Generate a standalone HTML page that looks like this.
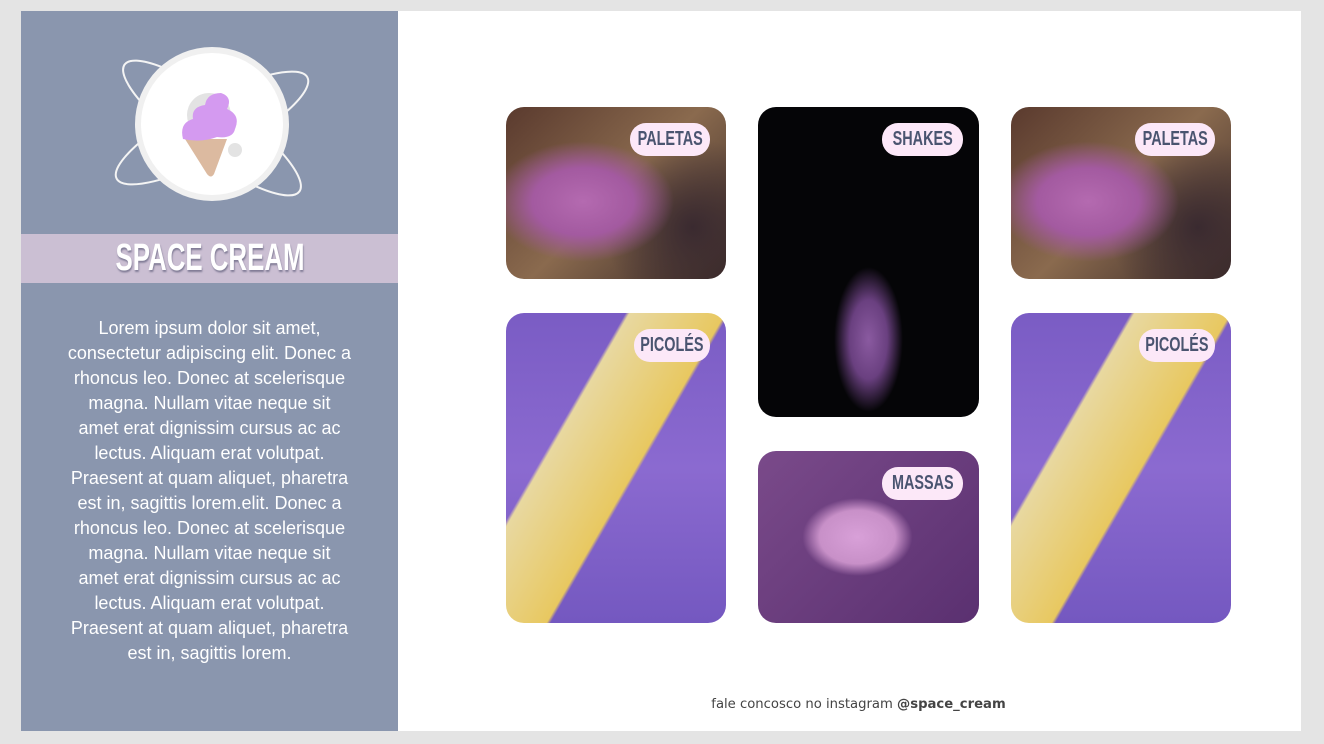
<!DOCTYPE html>
<html><head><style>
body{margin:0;width:1324px;height:744px;background:#e4e4e4;position:relative;overflow:hidden;font-family:"Liberation Sans",sans-serif}
.left{position:absolute;left:21px;top:11px;width:377px;height:720px;background:#8a96ae}
.band{position:absolute;left:0;top:223px;width:377px;height:49px;background:#cbbfd3;text-align:center;color:#fff;font-weight:bold;font-size:38px;line-height:49px;text-shadow:1px 2px 2px rgba(80,80,110,.6)}
.band span{display:inline-block;transform:scaleX(0.68)}
.txt{position:absolute;left:45px;top:305px;width:287px;text-align:center;color:#fff;font-size:18px;line-height:25px}
.right{position:absolute;left:398px;top:11px;width:903px;height:720px;background:#fff}
.card{position:absolute;border-radius:18px;overflow:hidden}
.pill{position:absolute;top:16px;right:16px;background:#fce8f8;color:#4a5470;border-radius:16px;height:33px;line-height:33px;display:flex;justify-content:center;font-weight:bold;font-size:20px;white-space:nowrap}
.pill span{display:inline-block;transform:scaleX(0.72)}
.pal{background:radial-gradient(ellipse at 35% 55%,#b46ab0 0,#a35aa0 25%,transparent 45%),radial-gradient(circle at 85% 70%,#3a2a30 0,transparent 40%),linear-gradient(135deg,#5a3a2e,#8a6a4e 50%,#3a2a28)}
.pic{background:linear-gradient(120deg,transparent 30%,#e8d8a0 31%,#e8c860 55%,transparent 56%),linear-gradient(180deg,#7a5cc4,#8b6ad0 50%,#7458c0);}
.foot{position:absolute;left:9px;width:903px;top:686px;text-align:center;font-size:13.2px;color:#444;font-family:"DejaVu Sans",sans-serif}
</style></head><body>
<div class="left">
<svg style="position:absolute;left:0;top:0" width="377" height="223" viewBox="0 0 377 223">
<ellipse cx="191" cy="117" rx="108" ry="28" transform="rotate(36 191 117)" fill="none" stroke="#f4f4f4" stroke-width="2"/>
<ellipse cx="191" cy="117" rx="108" ry="28" transform="rotate(-28 191 117)" fill="none" stroke="#f4f4f4" stroke-width="2"/>
<circle cx="191" cy="113" r="77" fill="#f0f0f0"/>
<circle cx="191" cy="113" r="71" fill="#fff"/>
<circle cx="188" cy="104" r="22" fill="#e3e3e3"/>
<circle cx="214" cy="139" r="7" fill="#e3e3e3"/>
<path d="M164 128 L206 128 L193 163 Q190 168 186 163 Z" fill="#dcbaa0"/>
<path d="M162 128 Q158 112 172 108 Q170 96 184 94 Q186 82 200 82 Q212 86 206 98 Q220 104 214 118 Q212 128 196 126 Q180 132 162 128 Z" fill="#d49af0"/>
</svg>
<div class="band"><span>SPACE CREAM</span></div>
<div class="txt">Lorem ipsum dolor sit amet, consectetur adipiscing elit. Donec a rhoncus leo. Donec at scelerisque magna. Nullam vitae neque sit amet erat dignissim cursus ac ac lectus. Aliquam erat volutpat. Praesent at quam aliquet, pharetra est in, sagittis lorem.elit. Donec a rhoncus leo. Donec at scelerisque magna. Nullam vitae neque sit amet erat dignissim cursus ac ac lectus. Aliquam erat volutpat. Praesent at quam aliquet, pharetra est in, sagittis lorem.</div>
</div>
<div class="right">
<div class="card pal" style="left:108px;top:96px;width:220px;height:172px"><div class="pill" style="width:80px"><span>PALETAS</span></div></div>
<div class="card" style="left:360px;top:96px;width:221px;height:310px;background:radial-gradient(ellipse at 50% 75%,#8a5aa0 0,#6a4080 12%,transparent 22%),#050507"><div class="pill" style="width:81px"><span>SHAKES</span></div></div>
<div class="card pal" style="left:613px;top:96px;width:220px;height:172px"><div class="pill" style="width:80px"><span>PALETAS</span></div></div>
<div class="card pic" style="left:108px;top:302px;width:220px;height:310px"><div class="pill" style="width:76px"><span>PICOLÉS</span></div></div>
<div class="card" style="left:360px;top:440px;width:221px;height:172px;background:radial-gradient(ellipse at 45% 50%,#d8a0d8 0,#c890c8 22%,transparent 32%),linear-gradient(135deg,#7a4a8a,#5a3070)"><div class="pill" style="width:81px"><span>MASSAS</span></div></div>
<div class="card pic" style="left:613px;top:302px;width:220px;height:310px"><div class="pill" style="width:76px"><span>PICOLÉS</span></div></div>
<div class="foot">fale concosco no instagram <b>@space_cream</b></div>
</div>
</body></html>
